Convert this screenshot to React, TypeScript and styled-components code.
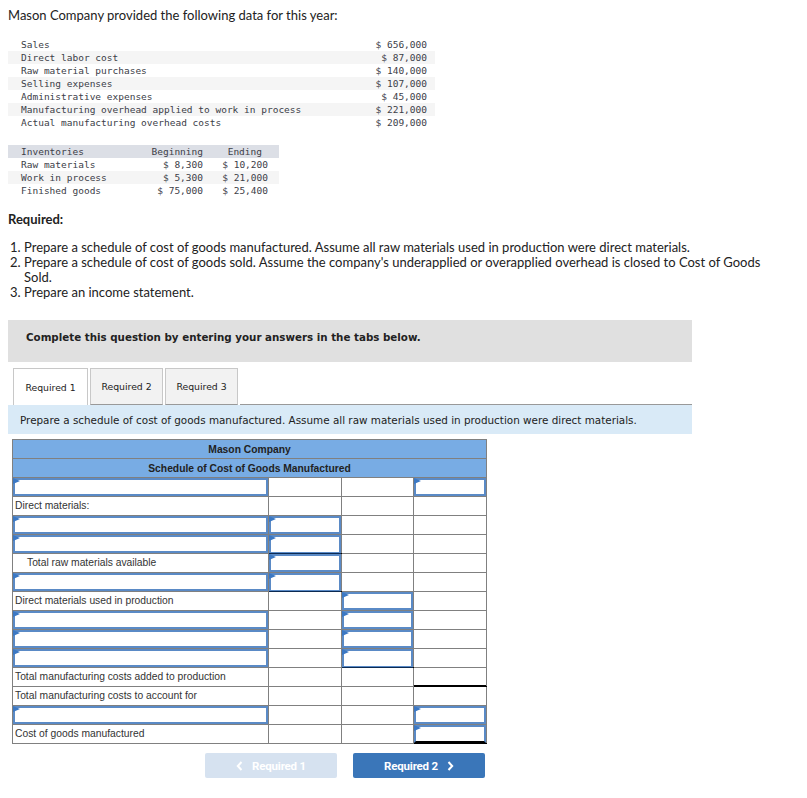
import React from "react";
import styled, { createGlobalStyle } from "styled-components";

const GlobalStyle = createGlobalStyle`
	html, body {
		margin: 0;
		padding: 0;
		background: #ffffff;
	}
	body {
		font-family: Lato, "Liberation Sans", sans-serif;
		color: #222;
	}
`;

const Page = styled.div`
	width: 807px;
	padding: 7px 8px 20px 8px;
	box-sizing: border-box;
`;

const Intro = styled.p`
	margin: 0;
	font-size: 13px;
	line-height: 16px;
	color: #222;
`;

const DataTable = styled.table<{ $top: number; $width: number }>`
	border-collapse: collapse;
	table-layout: fixed;
	font-family: "DejaVu Sans Mono", "Liberation Mono", monospace;
	font-size: 9.5px;
	color: #3c4048;
	margin-top: ${(p) => p.$top}px;
	width: ${(p) => p.$width}px;
`;

const DataRow = styled.tr<{ $shade?: "none" | "gray" | "head" }>`
	height: 13px;
	background: ${(p) => (p.$shade === "gray" ? "#f5f5f5" : p.$shade === "head" ? "#dcdfe6" : "transparent")};
`;

const DataCell = styled.td<{ $align?: "left" | "right"; $pl?: number; $pr?: number }>`
	padding: 0 ${(p) => p.$pr ?? 0}px 0 ${(p) => p.$pl ?? 0}px;
	box-sizing: border-box;
	line-height: 13px;
	white-space: pre;
	text-align: ${(p) => p.$align ?? "left"};
`;

const RequiredTitle = styled.div`
	margin-top: 14px;
	font-size: 13px;
	line-height: 16px;
	font-weight: 700;
`;

const TaskList = styled.ol`
	margin: 13px 0 0 0;
	padding: 0 0 0 16px;
	font-size: 13px;
	line-height: 15px;
	width: 745px;
`;

const Notice = styled.div`
	margin-top: 20px;
	width: 684px;
	height: 42px;
	box-sizing: border-box;
	background: #e0e0e0;
	padding: 10px 0 0 18px;
	font-family: "DejaVu Sans", Verdana, sans-serif;
	font-size: 10.3px;
	line-height: 14px;
	font-weight: 700;
	color: #222;
`;

const TabRow = styled.div`
	margin-top: 6px;
	padding-left: 5px;
	width: 684px;
	box-sizing: border-box;
	display: flex;
	gap: 2px;
	height: 37px;
`;

const Tab = styled.div<{ $active?: boolean }>`
	width: ${(p) => (p.$active ? 75 : 73)}px;
	box-sizing: border-box;
	border: 1px solid #c8c8c8;
	border-bottom: ${(p) => (p.$active ? "none" : "1px solid #999")};
	background: ${(p) => (p.$active ? "#ffffff" : "#f2f2f2")};
	display: flex;
	align-items: center;
	justify-content: center;
	font-family: "DejaVu Sans", Verdana, sans-serif;
	font-size: 9.3px;
	color: #222;
`;

const TabLine = styled.div`
	flex: 1;
	border-bottom: 1px solid #999;
`;

const Instruction = styled.div`
	width: 684px;
	height: 29px;
	box-sizing: border-box;
	background: #d9eaf7;
	padding-left: 12px;
	display: flex;
	align-items: center;
	font-family: "DejaVu Sans", Verdana, sans-serif;
	font-size: 10.4px;
	color: #222;
`;

const Schedule = styled.table`
	margin: 5px 0 0 4px;
	border-collapse: collapse;
	width: 474px;
	table-layout: fixed;
	font-family: "Liberation Sans", Arial, sans-serif;
	font-size: 10.3px;
	color: #333;
`;

const HeadCell = styled.td`
	height: 19px;
	padding: 0;
	box-sizing: border-box;
	background: #78ace4;
	border: 1px solid #808080;
	text-align: center;
	font-weight: 700;
	color: #222;
`;

type Bottom = "black" | "thick";

const Cell = styled.td<{ $bottom?: Bottom; $indent?: boolean }>`
	height: 19px;
	padding: 0 0 0 ${(p) => (p.$indent ? 14 : 2)}px;
	box-sizing: border-box;
	border: 1px solid #808080;
	border-bottom-color: ${(p) => (p.$bottom ? "#000" : "#808080")};
	box-shadow: ${(p) => (p.$bottom ? "inset 0 -1px 0 #000" : "none")};
	white-space: nowrap;
	vertical-align: middle;
	line-height: 12px;
`;

const InputCell = styled.td<{ $bottom?: Bottom }>`
	height: 19px;
	padding: 0;
	box-sizing: border-box;
	border: 1px solid #808080;
	border-bottom-color: ${(p) => (p.$bottom ? "#000" : "#808080")};
`;

const InputBox = styled.div<{ $bottom?: Bottom }>`
	position: relative;
	height: 18px;
	box-sizing: border-box;
	border: 2px solid #5a8ac6;
	border-bottom: ${(p) => (p.$bottom === "thick" ? "2px solid #000" : p.$bottom === "black" ? "1px solid #5a8ac6" : "2px solid #5a8ac6")};
	box-shadow: ${(p) => (p.$bottom === "black" ? "0 1px 0 #0b2a52" : "none")};
	background: #fff;

	&::before {
		content: "";
		position: absolute;
		left: -2px;
		top: -2px;
		border-top: 3px solid transparent;
		border-bottom: 3px solid transparent;
		border-left: 7px solid #3b78c4;
	}
`;

const ButtonRow = styled.div`
	margin: 9px 0 0 197px;
	display: flex;
	gap: 16px;
`;

const NavButton = styled.div<{ $disabled?: boolean }>`
	width: 132px;
	height: 25px;
	border-radius: 2px;
	background: ${(p) => (p.$disabled ? "#d6e2f0" : "#3a76b9")};
	color: #fff;
	display: flex;
	align-items: center;
	justify-content: center;
	gap: 9px;
	font-family: Roboto, "Liberation Sans", Arial, sans-serif;
	font-weight: 700;
	font-size: 11.5px;
	letter-spacing: -0.2px;
`;

const Chevron = ({ dir }: { dir: "left" | "right" }) => (
	<svg width="7" height="10" viewBox="0 0 7 10">
		<path
			d={dir === "left" ? "M5.5 1 L1.8 5 L5.5 9" : "M1.5 1 L5.2 5 L1.5 9"}
			fill="none"
			stroke="#fff"
			strokeWidth="2"
		/>
	</svg>
);

const facts: [string, string][] = [
	["Sales", "$ 656,000"],
	["Direct labor cost", "$ 87,000"],
	["Raw material purchases", "$ 140,000"],
	["Selling expenses", "$ 107,000"],
	["Administrative expenses", "$ 45,000"],
	["Manufacturing overhead applied to work in process", "$ 221,000"],
	["Actual manufacturing overhead costs", "$ 209,000"],
];

const inventories: [string, string, string][] = [
	["Raw materials", "$ 8,300", "$ 10,200"],
	["Work in process", "$ 5,300", "$ 21,000"],
	["Finished goods", "$ 75,000", "$ 25,400"],
];

type Col = { kind: "empty" | "input" | "text"; text?: string; indent?: boolean; bottom?: Bottom };
const E: Col = { kind: "empty" };
const I: Col = { kind: "input" };

const rows: Col[][] = [
	[I, E, E, I],
	[{ kind: "text", text: "Direct materials:" }, E, E, E],
	[I, I, E, E],
	[I, { kind: "input", bottom: "black" }, E, E],
	[{ kind: "text", text: "Total raw materials available", indent: true }, I, E, E],
	[I, { kind: "input", bottom: "black" }, E, E],
	[{ kind: "text", text: "Direct materials used in production" }, E, I, E],
	[I, E, I, E],
	[I, E, I, E],
	[I, E, { kind: "input", bottom: "black" }, E],
	[{ kind: "text", text: "Total manufacturing costs added to production" }, E, E, { kind: "empty", bottom: "black" }],
	[{ kind: "text", text: "Total manufacturing costs to account for" }, E, E, E],
	[I, E, E, I],
	[{ kind: "text", text: "Cost of goods manufactured" }, E, E, { kind: "input", bottom: "thick" }],
];

function ScheduleCell({ col }: { col: Col }) {
	if (col.kind === "input") {
		return (
			<InputCell $bottom={col.bottom}>
				<InputBox $bottom={col.bottom} />
			</InputCell>
		);
	}
	return (
		<Cell $bottom={col.bottom} $indent={col.indent}>
			{col.text}
		</Cell>
	);
}

export default function App() {
	return (
		<Page>
			<GlobalStyle />
			<Intro>Mason Company provided the following data for this year:</Intro>

			<DataTable $top={15} $width={427}>
				<colgroup>
					<col style={{ width: 340 }} />
					<col style={{ width: 87 }} />
				</colgroup>
				<tbody>
					{facts.map(([label, value], i) => (
						<DataRow key={label} $shade={i % 2 === 1 ? "gray" : "none"}>
							<DataCell $pl={13}>{label}</DataCell>
							<DataCell $align="right" $pr={8}>
								{value}
							</DataCell>
						</DataRow>
					))}
				</tbody>
			</DataTable>

			<DataTable $top={16} $width={271}>
				<colgroup>
					<col style={{ width: 133 }} />
					<col style={{ width: 66 }} />
					<col style={{ width: 72 }} />
				</colgroup>
				<tbody>
					<DataRow $shade="head">
						<DataCell $pl={13}>Inventories</DataCell>
						<DataCell $align="right" $pr={4}>
							Beginning
						</DataCell>
						<DataCell $align="right" $pr={17}>
							Ending
						</DataCell>
					</DataRow>
					{inventories.map(([label, begin, end], i) => (
						<DataRow key={label} $shade={i === 1 ? "gray" : "none"}>
							<DataCell $pl={13}>{label}</DataCell>
							<DataCell $align="right" $pr={4}>
								{begin}
							</DataCell>
							<DataCell $align="right" $pr={11}>
								{end}
							</DataCell>
						</DataRow>
					))}
				</tbody>
			</DataTable>

			<RequiredTitle>Required:</RequiredTitle>
			<TaskList>
				<li>Prepare a schedule of cost of goods manufactured. Assume all raw materials used in production were direct materials.</li>
				<li>
					Prepare a schedule of cost of goods sold. Assume the company's underapplied or overapplied overhead is closed to Cost of Goods
					Sold.
				</li>
				<li>Prepare an income statement.</li>
			</TaskList>

			<Notice>Complete this question by entering your answers in the tabs below.</Notice>

			<TabRow>
				<Tab $active>Required 1</Tab>
				<Tab>Required 2</Tab>
				<Tab>Required 3</Tab>
				<TabLine />
			</TabRow>
			<Instruction>Prepare a schedule of cost of goods manufactured. Assume all raw materials used in production were direct materials.</Instruction>

			<Schedule>
				<colgroup>
					<col style={{ width: 256 }} />
					<col style={{ width: 73 }} />
					<col style={{ width: 72 }} />
					<col style={{ width: 73 }} />
				</colgroup>
				<tbody>
					<tr>
						<HeadCell colSpan={4}>Mason Company</HeadCell>
					</tr>
					<tr>
						<HeadCell colSpan={4}>Schedule of Cost of Goods Manufactured</HeadCell>
					</tr>
					{rows.map((r, i) => (
						<tr key={i}>
							{r.map((c, j) => (
								<ScheduleCell key={j} col={c} />
							))}
						</tr>
					))}
				</tbody>
			</Schedule>

			<ButtonRow>
				<NavButton $disabled>
					<Chevron dir="left" />
					Required 1
				</NavButton>
				<NavButton>
					Required 2
					<Chevron dir="right" />
				</NavButton>
			</ButtonRow>
		</Page>
	);
}
